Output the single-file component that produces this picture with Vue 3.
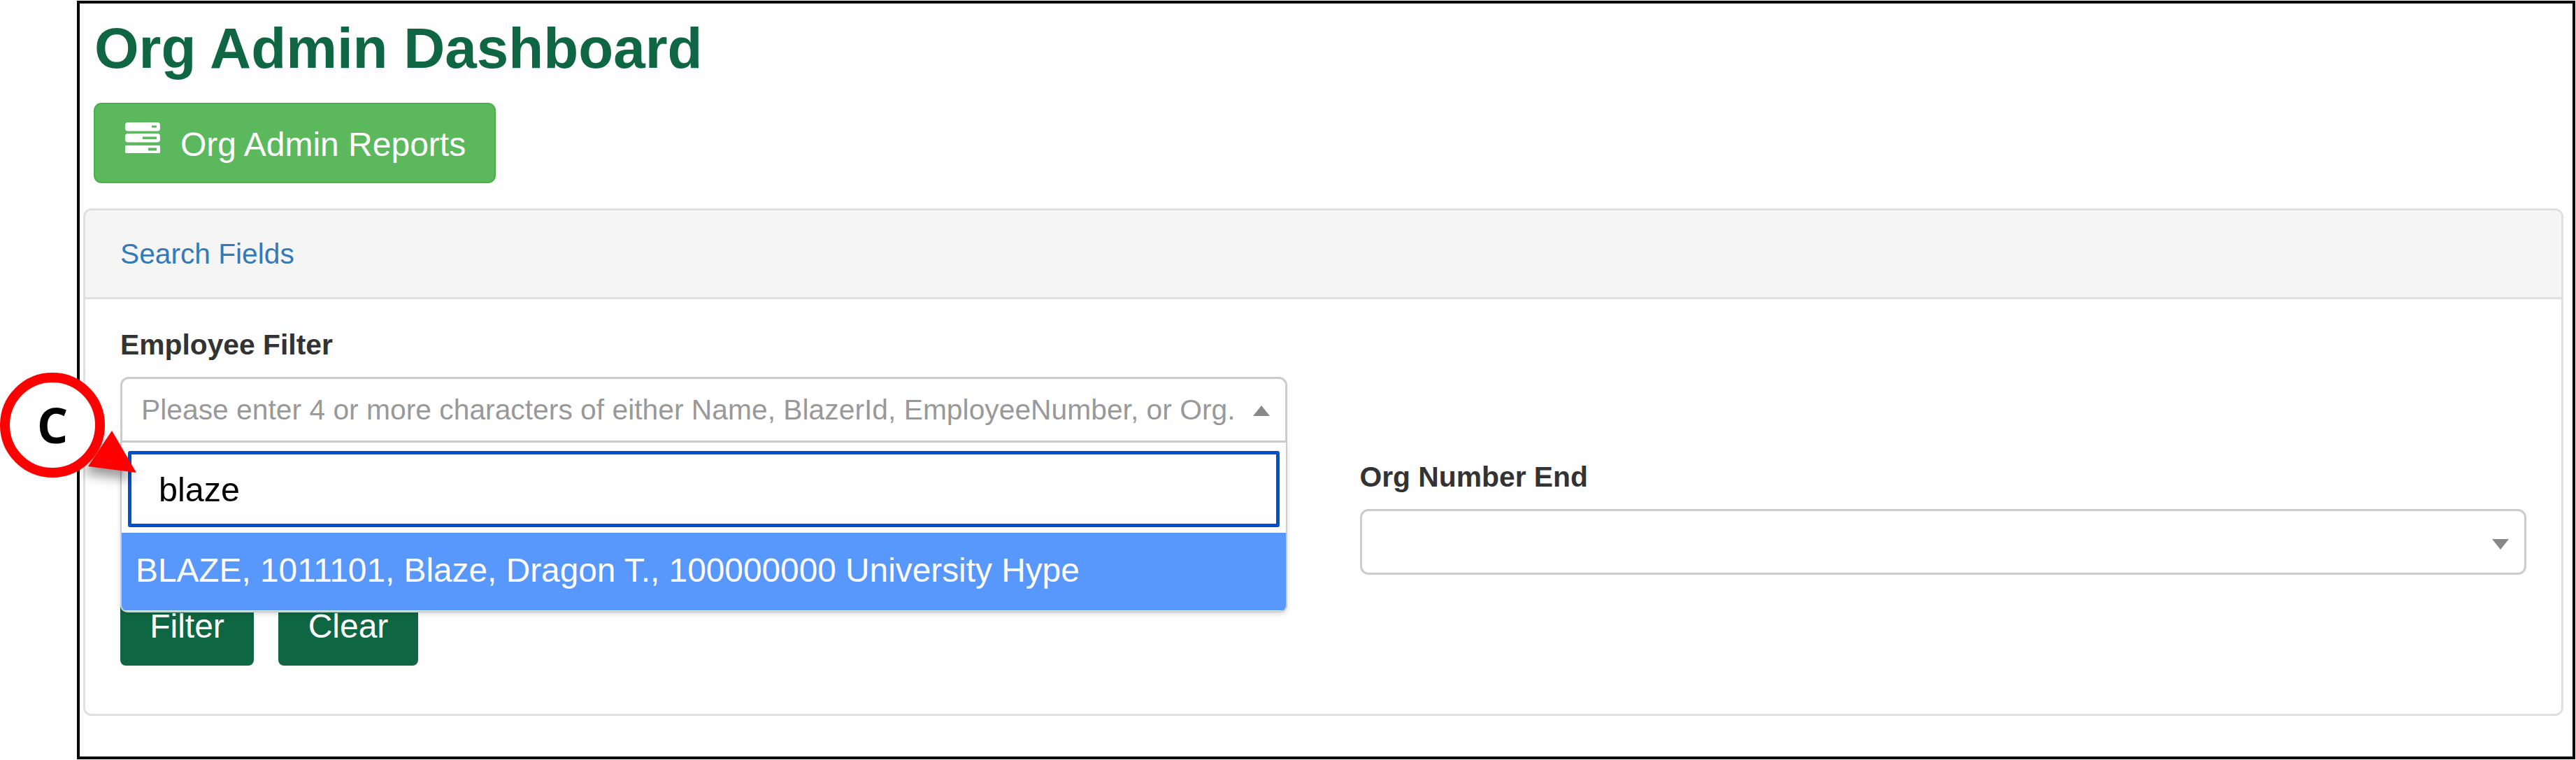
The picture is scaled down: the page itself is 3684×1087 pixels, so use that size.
<script setup>
const placeholder = 'Please enter 4 or more characters of either Name, BlazerId, EmployeeNumber, or Org.'
const result = 'BLAZE, 1011101, Blaze, Dragon T., 100000000 University Hype'
</script>

<template>
  <div class="page">
    <main class="frame">
      <header class="top">
        <h1 class="title">Org Admin Dashboard</h1>
        <button class="reports" type="button">
          <svg class="server" viewBox="0 0 50 44" aria-hidden="true">
            <rect x="0" y="0" width="50" height="12.5" rx="4" fill="#fff" />
            <rect x="0" y="16" width="50" height="12.5" rx="4" fill="#fff" />
            <rect x="0" y="33" width="50" height="11" rx="1.5" fill="#fff" />
            <rect x="38" y="4.5" width="7" height="3" fill="#5cb85c" />
            <rect x="25" y="20.5" width="20" height="3.5" fill="#5cb85c" />
            <rect x="33" y="36.5" width="12" height="4" fill="#5cb85c" />
          </svg>
          <span class="reports-text">Org Admin Reports</span>
        </button>
      </header>

      <section class="card">
        <div class="card-head">Search Fields</div>
        <div class="card-body">
          <div class="fields">
            <div class="field wide">
              <label class="label">Employee Filter</label>
              <div class="select open">
                <span class="placeholder">{{ placeholder }}</span>
                <i class="caret up"></i>
                <div class="dropdown">
                  <input class="search" type="text" value="blaze" />
                  <div class="option">{{ result }}</div>
                </div>
              </div>
            </div>
            <div class="field end">
              <label class="label">Org Number End</label>
              <div class="select">
                <i class="caret"></i>
              </div>
            </div>
          </div>
          <div class="actions">
            <button class="action" type="button">Filter</button>
            <button class="action" type="button">Clear</button>
          </div>
        </div>
      </section>
    </main>

    <div class="callout">
      <svg class="arrow" viewBox="0 0 90 70" aria-hidden="true">
        <polygon points="39,6 74,66 5,57" fill="#ff0000" />
      </svg>
      <div class="badge">C</div>
    </div>
  </div>
</template>

<style>
html, body { margin: 0; background: #fff; }
</style>

<style scoped>
.page {
  position: relative;
  width: 3684px;
  height: 1087px;
  box-sizing: border-box;
  padding: 1px 0 0 110px;
  background: #fff;
  font-family: "Liberation Sans", Arial, sans-serif;
  overflow: hidden;
}
.frame {
  box-sizing: border-box;
  width: 3573px;
  height: 1085px;
  border: 4px solid #000;
  padding: 0 13px 0 5px;
  background: #fefefe;
}
.top { padding-left: 15px; }
.title {
  margin: 0 0 0 1px;
  padding-top: 19px;
  font-size: 81.8px;
  line-height: 89px;
  font-weight: 700;
  color: #0f6642;
}
.reports {
  display: flex;
  align-items: center;
  gap: 29px;
  box-sizing: border-box;
  width: 575px;
  height: 115px;
  margin-top: 34px;
  padding: 0 0 0 43px;
  border: 2px solid #4cae4c;
  border-radius: 11px;
  background: #5cb85c;
  color: #fff;
  font-family: inherit;
  font-size: 48px;
}
.reports-text { margin-top: 3px; }
.server { width: 50px; height: 44px; margin-top: -15px; flex: none; }
.card {
  box-sizing: border-box;
  height: 726px;
  margin-top: 36px;
  border: 3px solid #e0e0e0;
  border-radius: 12px;
  background: #fefefe;
}
.card-head {
  box-sizing: border-box;
  height: 127px;
  padding-left: 50px;
  border-bottom: 3px solid #e0e0e0;
  border-radius: 9px 9px 0 0;
  background: #f5f5f5;
  color: #337ab7;
  font-size: 40.7px;
  line-height: 124px;
}
.card-body { padding: 36px 50px 0 50px; }
.fields {
  display: grid;
  grid-template-columns: 1fr 1fr;
  column-gap: 104px;
  row-gap: 20px;
}
.wide { grid-column: 1 / -1; width: calc(50% - 52px); }
.end { grid-column: 2; }
.label {
  display: block;
  margin-bottom: 17px;
  font-size: 40.8px;
  line-height: 58px;
  font-weight: 700;
  color: #333;
}
.select {
  position: relative;
  box-sizing: border-box;
  height: 94px;
  padding-left: 27px;
  border: 3px solid #ccc;
  border-radius: 12px;
  background: #fff;
  line-height: 88px;
}
.select.open { border-radius: 12px 12px 0 0; }
.placeholder {
  font-size: 40.8px;
  color: #999;
  white-space: nowrap;
}
.caret {
  position: absolute;
  top: 40px;
  right: 22px;
  width: 0;
  height: 0;
  border-left: 12.5px solid transparent;
  border-right: 12.5px solid transparent;
  border-top: 15px solid #888;
}
.caret.up {
  top: 38px;
  border-top: 0;
  border-bottom: 15px solid #888;
}
.dropdown {
  position: absolute;
  z-index: 2;
  top: 91px;
  left: -3px;
  right: -3px;
  box-sizing: border-box;
  height: 243px;
  padding-top: 12px;
  border: 2px solid #ccc;
  border-top: 0;
  border-radius: 0 0 10px 10px;
  background: #fff;
  box-shadow: 0 3px 6px rgba(0, 0, 0, 0.12);
  overflow: hidden;
}
.search {
  display: block;
  box-sizing: border-box;
  width: 1647px;
  height: 109px;
  margin: 0 0 8px 9px;
  padding: 0 0 0 39px;
  border: 5px solid #0050d0;
  border-radius: 3px;
  outline: none;
  background: #fff;
  color: #000;
  font-family: inherit;
  font-size: 48.5px;
}
.option {
  height: 111px;
  padding-left: 20px;
  background: #5897fb;
  color: #fff;
  font-size: 47.8px;
  line-height: 108px;
  white-space: nowrap;
}
.actions {
  display: flex;
  gap: 35px;
  margin-top: 40px;
}
.action {
  box-sizing: border-box;
  height: 90px;
  padding: 0 0 24px;
  border: 0;
  border-radius: 8px;
  background: #0f6642;
  color: #fff;
  font-family: inherit;
  font-size: 48px;
}
.action:first-child { width: 191px; }
.action:last-child { width: 200px; }
.callout {
  position: absolute;
  z-index: 3;
  left: 0;
  top: 533px;
  width: 200px;
  height: 150px;
}
.arrow {
  position: absolute;
  left: 121px;
  top: 77px;
  width: 90px;
  height: 70px;
  filter: drop-shadow(-6px 10px 8px rgba(0, 0, 0, 0.4));
}
.badge {
  position: absolute;
  left: 0;
  top: 0;
  box-sizing: border-box;
  width: 150px;
  height: 150px;
  border: 14px solid #ff0000;
  border-radius: 50%;
  background: #fff;
  color: #000;
  font-family: "Open Sans", sans-serif;
  font-size: 70px;
  font-weight: 700;
  line-height: 120px;
  text-align: center;
}
</style>
